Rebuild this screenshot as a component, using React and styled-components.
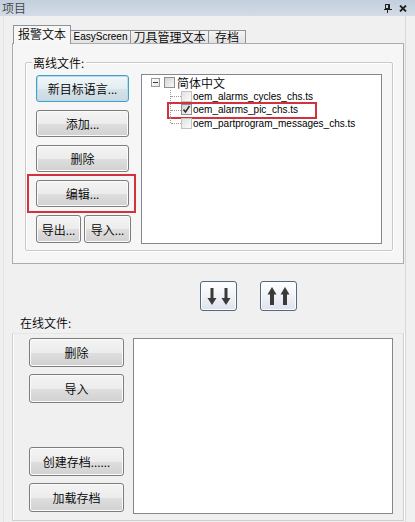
import React from 'react';
import styled, { createGlobalStyle } from 'styled-components';

const GlobalStyle = createGlobalStyle`
  html, body { margin: 0; padding: 0; background: #f0f0f0; }
  body {
    font-family: "Noto Sans CJK SC", "Liberation Sans", sans-serif;
    font-size: 12px;
    color: #000;
  }
`;

const CJK = '"Noto Sans CJK SC", "Liberation Sans", sans-serif';
const LATIN = '"Liberation Sans", "Noto Sans CJK SC", sans-serif';

const Window = styled.div`
  width: 415px;
  height: 522px;
  overflow: hidden;
  background: #f0f0f0;
  display: flex;
  flex-direction: column;
`;

const TitleBar = styled.div`
  height: 16px;
  flex: none;
  display: flex;
  align-items: center;
  justify-content: space-between;
  padding: 0 8px 0 2px;
  background: linear-gradient(#c3cfdd, #d3dce7);
  color: #444;
  font-family: ${CJK};
  font-weight: 350;
  font-size: 12px;
  line-height: 16px;
`;

const TitleIcons = styled.div`
  display: flex;
  align-items: center;
  gap: 7px;
  color: #222;
`;

const Body = styled.div`
  flex: 1;
  margin: 0 9px 0 3px;
  border-left: 1px solid #e4e4e4;
  border-right: 1px solid #d8d8d8;
  display: flex;
  flex-direction: column;
`;

const TabStrip = styled.div`
  height: 27px;
  display: flex;
  align-items: flex-end;
  padding-left: 9px;
`;

const Tab = styled.div`
  box-sizing: border-box;
  position: relative;
  z-index: ${p => (p.$active ? 2 : 1)};
  width: ${p => p.$w}px;
  height: ${p => (p.$active ? 19 : 13)}px;
  margin-left: ${p => (p.$first ? 0 : -1)}px;
  margin-bottom: ${p => (p.$active ? -1 : 0)}px;
  border: 1px solid #8e939a;
  border-bottom: none;
  background: ${p => (p.$active ? '#f7f7f7' : 'linear-gradient(#f4f4f4, #e2e2e2)')};
  display: flex;
  align-items: center;
  justify-content: center;
  font-family: ${p => (p.$latin ? LATIN : CJK)};
  font-weight: ${p => (p.$latin ? 400 : 350)};
  font-size: ${p => (p.$latin ? 10 : 12)}px;
  line-height: 12px;
  color: #000;
  padding-bottom: ${p => (p.$active ? 3 : 0)}px;
`;

const TabPanel = styled.div`
  box-sizing: border-box;
  margin-left: 8px;
  width: 392px;
  height: 221px;
  border: 1px solid #a9acb0;
  background: #f6f6f6;
  padding: 18px 11px 0 12px;
`;

const GroupBox = styled.div`
  box-sizing: border-box;
  width: 368px;
  height: 189px;
  border: 1px solid #c9c9c9;
  border-radius: 2px;
  box-shadow: inset 1px 1px 0 #fff, 1px 1px 0 #fff;
  display: flex;
  flex-direction: column;
`;

const GroupLabel = styled.div`
  align-self: flex-start;
  margin: -7px 0 0 6px;
  padding: 0 2px 0 1px;
  height: 14px;
  line-height: 14px;
  background: #f6f6f6;
  font-family: ${CJK};
  font-weight: 350;
  font-size: 12px;
`;

const OfflineRow = styled.div`
  display: flex;
  gap: 12px;
  margin-top: 4px;
  padding-left: 10px;
`;

const ButtonColumn = styled.div`
  width: 93px;
  margin-top: 1px;
  display: flex;
  flex-direction: column;
  gap: 8px;
`;

const ButtonPair = styled.div`
  display: flex;
  gap: 3px;
`;

const Button = styled.button`
  box-sizing: border-box;
  width: ${p => (p.$w ? `${p.$w}px` : '100%')};
  height: ${p => p.$h || 27}px;
  flex: none;
  margin: 0;
  padding: 0;
  border: 1px solid ${p => (p.$focus ? '#4c9dc4' : '#7d7d7d')};
  border-radius: 3px;
  box-shadow: inset 0 0 0 1px ${p => (p.$focus ? '#b3def1' : '#fbfbfb')};
  background: ${p =>
    p.$focus
      ? 'linear-gradient(#f1f7f9 0%, #e4edf1 50%, #d7e3e9 51%, #cad9e0 100%)'
      : 'linear-gradient(#f4f4f4 0%, #ececec 50%, #dedede 51%, #d1d1d1 100%)'};
  font-family: ${CJK};
  font-weight: 350;
  font-size: 12px;
  color: #000;
  cursor: default;
`;

const Marked = styled.div`
  position: relative;
  &::after {
    content: '';
    position: absolute;
    inset: -6px -7px -6px -9px;
    border: 2px solid #d2323e;
    pointer-events: none;
  }
`;

const Tree = styled.div`
  box-sizing: border-box;
  width: 241px;
  height: 170px;
  border: 1px solid #828790;
  background: #fff;
  padding-top: 1px;
`;

const TreeRow = styled.div`
  position: relative;
  height: 13.5px;
  display: flex;
  align-items: center;
  padding-left: ${p => (p.$child ? 28 : 9)}px;
  ${p =>
    p.$marked &&
    `&::after {
      content: '';
      position: absolute;
      left: 25px;
      width: 146px;
      top: -1px;
      bottom: -2px;
      border: 2px solid #d2323e;
    }`}
`;

const Elbow = styled.span`
  position: relative;
  align-self: stretch;
  width: 11px;
  flex: none;
  &::before {
    content: '';
    position: absolute;
    left: 0;
    top: 0;
    bottom: ${p => (p.$last ? '50%' : '0')};
    border-left: 1px dotted #9c9c9c;
  }
  &::after {
    content: '';
    position: absolute;
    left: 1px;
    right: 0;
    top: 50%;
    border-top: 1px dotted #9c9c9c;
  }
`;

const Expander = styled.span`
  box-sizing: border-box;
  width: 9px;
  height: 9px;
  flex: none;
  border: 1px solid #9a9a9a;
  background: linear-gradient(135deg, #ffffff, #e6e6e6);
  display: flex;
  align-items: center;
  justify-content: center;
  &::before {
    content: '';
    width: 5px;
    height: 1px;
    background: #3a3a3a;
  }
`;

const CheckBox = styled.span`
  box-sizing: border-box;
  width: 11px;
  height: 11px;
  flex: none;
  margin-left: ${p => p.$ml || 0}px;
  border: 1px solid ${p => (p.$dim ? '#c2c2c2' : '#8f8f8f')};
  background: ${p =>
    p.$dim ? 'linear-gradient(135deg, #e2e2e2, #fbfbfb)' : 'linear-gradient(135deg, #d4d4d4, #f8f8f8)'};
  display: flex;
  align-items: center;
  justify-content: center;
`;

const TreeText = styled.span`
  margin-left: ${p => p.$ml || 2}px;
  font-family: ${p => (p.$latin ? LATIN : CJK)};
  font-weight: ${p => (p.$latin ? 400 : 350)};
  font-size: ${p => (p.$latin ? 10 : 12)}px;
  line-height: 13px;
  white-space: nowrap;
  color: #000;
`;

const ArrowRow = styled.div`
  display: flex;
  gap: 23px;
  margin-top: 17px;
  padding-left: 196px;
`;

const ArrowButton = styled.button`
  box-sizing: border-box;
  width: 37px;
  height: 30px;
  margin: 0;
  padding: 0;
  border: 1px solid #55687f;
  border-radius: 3px;
  background: linear-gradient(#ffffff, #f2f4f8 45%, #dde3ec);
  box-shadow: inset 0 0 0 1px #fafcff;
  display: flex;
  align-items: center;
  justify-content: center;
`;

const SectionLabel = styled.div`
  margin-top: 5px;
  padding-left: 16px;
  height: 14px;
  line-height: 14px;
  font-family: ${CJK};
  font-weight: 350;
  font-size: 12px;
`;

const OnlineBox = styled.div`
  box-sizing: border-box;
  margin: 3px 0 0 8px;
  width: 392px;
  height: 188px;
  border: 1px solid #cfcfcf;
  border-top-color: #e6e6e6;
  box-shadow: inset 1px 0 0 #fff, 1px 0 0 #fff;
  padding: 4px 10px 0 16px;
  display: flex;
  gap: 9px;
`;

const OnlineButtons = styled.div`
  width: 95px;
  height: 176px;
  box-sizing: border-box;
  padding-bottom: 2px;
  display: flex;
  flex-direction: column;
  justify-content: space-between;
`;

const ButtonStack = styled.div`
  display: flex;
  flex-direction: column;
  gap: 7px;
`;

const ListBox = styled.div`
  box-sizing: border-box;
  width: 260px;
  height: 176px;
  border: 1px solid #828790;
  background: #fff;
`;

const PinIcon = () => (
  <svg width="8" height="9" viewBox="0 0 8 9">
    <rect x="1.5" y="0.5" width="4" height="4" fill="none" stroke="#222" />
    <rect x="4" y="0" width="2" height="5" fill="#222" />
    <rect x="0" y="5" width="8" height="1" fill="#222" />
    <rect x="3" y="6" width="1" height="3" fill="#222" />
  </svg>
);

const CloseIcon = () => (
  <svg width="8" height="7" viewBox="0 0 8 7">
    <path d="M1 0.5 L7 6.5 M7 0.5 L1 6.5" stroke="#222" strokeWidth="1.8" />
  </svg>
);

const CheckMark = () => (
  <svg width="9" height="9" viewBox="0 0 9 9">
    <path d="M1.5 4.5 L3.5 7 L7.5 1" fill="none" stroke="#2a2a2a" strokeWidth="1.5" />
  </svg>
);

const DownArrows = () => (
  <svg width="24" height="19" viewBox="0 0 24 19">
    <rect x="3.5" y="1" width="3" height="11" fill="#3a3a3a" />
    <polygon points="0.5,11 9.5,11 5,18" fill="#3a3a3a" />
    <rect x="17.5" y="1" width="3" height="11" fill="#3a3a3a" />
    <polygon points="14.5,11 23.5,11 19,18" fill="#3a3a3a" />
  </svg>
);

const UpArrows = () => (
  <svg width="24" height="19" viewBox="0 0 24 19">
    <polygon points="5,0 0.5,7.5 9.5,7.5" fill="#3a3a3a" />
    <rect x="3" y="7" width="4" height="11" fill="#3a3a3a" />
    <polygon points="18,0 13.5,7.5 22.5,7.5" fill="#3a3a3a" />
    <rect x="16" y="7" width="4" height="11" fill="#3a3a3a" />
  </svg>
);

const tabs = [
  { label: '报警文本', w: 58, active: true },
  { label: 'EasyScreen', w: 61, latin: true },
  { label: '刀具管理文本', w: 79 },
  { label: '存档', w: 38 },
];

const files = [
  { name: 'oem_alarms_cycles_chs.ts' },
  { name: 'oem_alarms_pic_chs.ts', checked: true, marked: true },
  { name: 'oem_partprogram_messages_chs.ts' },
];

export default function App() {
  return (
    <Window>
      <GlobalStyle />
      <TitleBar>
        <span>项目</span>
        <TitleIcons>
          <PinIcon />
          <CloseIcon />
        </TitleIcons>
      </TitleBar>
      <Body>
        <TabStrip>
          {tabs.map((t, i) => (
            <Tab key={t.label} $w={t.w} $active={t.active} $latin={t.latin} $first={i === 0}>
              {t.label}
            </Tab>
          ))}
        </TabStrip>
        <TabPanel>
          <GroupBox>
            <GroupLabel>离线文件:</GroupLabel>
            <OfflineRow>
              <ButtonColumn>
                <Button $focus>新目标语言...</Button>
                <Button>添加...</Button>
                <Button>删除</Button>
                <Marked>
                  <Button>编辑...</Button>
                </Marked>
                <ButtonPair>
                  <Button $w={45} $h={28}>导出...</Button>
                  <Button $w={47} $h={28}>导入...</Button>
                </ButtonPair>
              </ButtonColumn>
              <Tree>
                <TreeRow>
                  <Expander />
                  <CheckBox $ml={4} />
                  <TreeText>简体中文</TreeText>
                </TreeRow>
                {files.map((f, i) => (
                  <TreeRow key={f.name} $child $marked={f.marked}>
                    <Elbow $last={i === files.length - 1} />
                    <CheckBox $dim={!f.checked}>{f.checked && <CheckMark />}</CheckBox>
                    <TreeText $latin $ml={1}>{f.name}</TreeText>
                  </TreeRow>
                ))}
              </Tree>
            </OfflineRow>
          </GroupBox>
        </TabPanel>
        <ArrowRow>
          <ArrowButton><DownArrows /></ArrowButton>
          <ArrowButton><UpArrows /></ArrowButton>
        </ArrowRow>
        <SectionLabel>在线文件:</SectionLabel>
        <OnlineBox>
          <OnlineButtons>
            <ButtonStack>
              <Button $h={29}>删除</Button>
              <Button $h={29}>导入</Button>
            </ButtonStack>
            <ButtonStack>
              <Button $h={29}>创建存档......</Button>
              <Button $h={29}>加载存档</Button>
            </ButtonStack>
          </OnlineButtons>
          <ListBox />
        </OnlineBox>
      </Body>
    </Window>
  );
}
